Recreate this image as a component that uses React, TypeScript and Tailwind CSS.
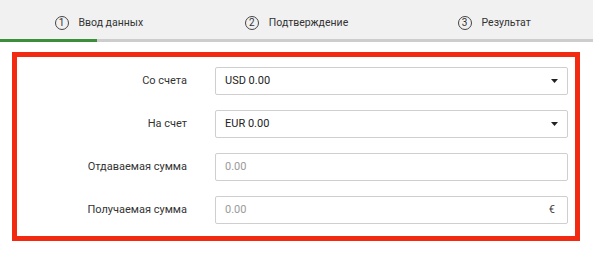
import React from "react";

const STEPS = ["Ввод данных", "Подтверждение", "Результат"];

function Caret() {
  return (
    <svg width="7" height="4" viewBox="0 0 7 4" className="shrink-0">
      <path d="M0 0h7L3.5 4z" fill="#222" />
    </svg>
  );
}

function Field({
  label,
  value,
  placeholder,
  select,
  suffix,
}: {
  label: string;
  value?: string;
  placeholder?: string;
  select?: boolean;
  suffix?: string;
}) {
  return (
    <div className="flex items-center">
      <label className="w-[198px] pr-[28px] text-right text-[11px] text-[#333]">{label}</label>
      <div className="flex h-[28px] w-[353px] items-center justify-between rounded-[2px] border border-[#cfcfcf] bg-white pl-[9px] pr-[9px] text-[11px]">
        {value ? (
          <span className="text-[#222]">{value}</span>
        ) : (
          <span className="text-[#9a9a9a]">{placeholder}</span>
        )}
        {select && <Caret />}
        {suffix && <span className="pr-[3px] text-[11px] text-[#444]">{suffix}</span>}
      </div>
    </div>
  );
}

export default function App() {
  return (
    <div className="h-[265px] w-[593px] bg-white font-['Roboto',sans-serif]">
      {/* steps header */}
      <div className="bg-[#f1f1f1]">
        <div className="grid h-[39px] grid-cols-3">
          {STEPS.map((s, i) => (
            <div key={s} className="flex items-center justify-center gap-[10px] pt-[7px]">
              <span className="flex h-[14px] w-[14px] items-center justify-center rounded-full border border-[#444] text-[10px] leading-none text-[#333]">
                {i + 1}
              </span>
              <span className="text-[10.5px] text-[#333]">{s}</span>
            </div>
          ))}
        </div>
        <div className="flex h-[3px]">
          <div className="w-[97px] bg-[#3b8f3b]" />
          <div className="flex-1 bg-[#cdcdcd]" />
        </div>
      </div>

      {/* form */}
      <div className="px-[12px] pt-[10px]">
        <div className="w-[568px] border-[5px] border-[#f22a12] pt-[10px] pb-[12px]">
          <div className="flex flex-col gap-[15px]">
            <Field label="Со счета" value="USD 0.00" select />
            <Field label="На счет" value="EUR 0.00" select />
            <Field label="Отдаваемая сумма" placeholder="0.00" />
            <Field label="Получаемая сумма" placeholder="0.00" suffix="€" />
          </div>
        </div>
      </div>
    </div>
  );
}
